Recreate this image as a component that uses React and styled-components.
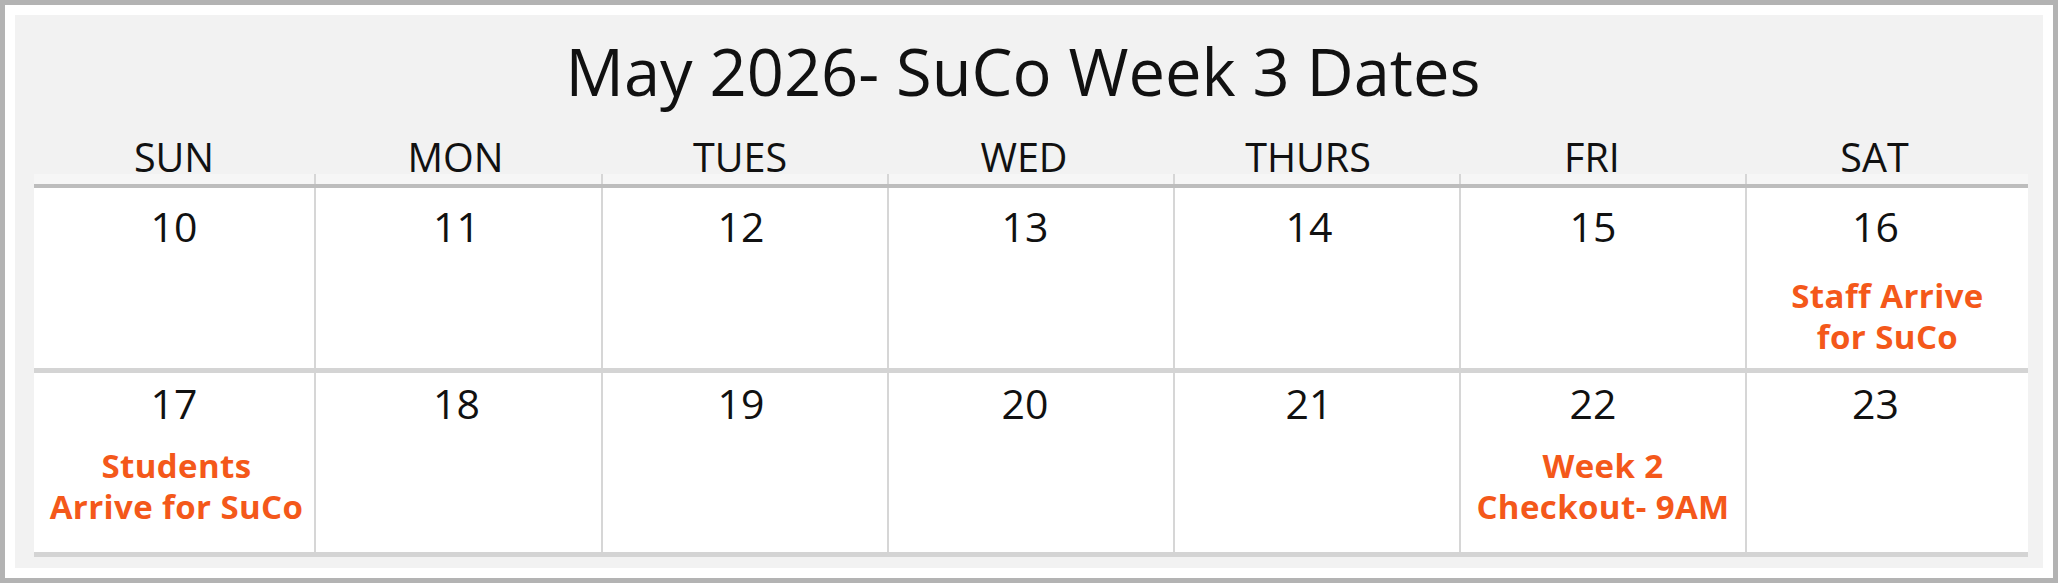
import React from "react";
import styled, { createGlobalStyle } from "styled-components";

const GlobalStyle = createGlobalStyle`
  html, body {
    margin: 0;
    padding: 0;
    background: #ffffff;
  }
  body {
    font-family: "Open Sans", "Noto Sans", sans-serif;
    color: #111111;
  }
`;

const Frame = styled.div`
  box-sizing: border-box;
  width: 2058px;
  height: 583px;
  border: 5px solid #b3b3b3;
  padding: 10px;
  background: #ffffff;
`;

const Panel = styled.div`
  box-sizing: border-box;
  height: 100%;
  background: #f2f2f2;
  padding: 12px 15px 10px 19px;
`;

const Title = styled.h1`
  margin: 0 0 15px;
  padding-right: 16px;
  font-size: 65px;
  font-weight: 400;
  line-height: 89px;
  text-align: center;
`;

const columns = "280px 287px repeat(4, 286px) 1fr";

const HeadRow = styled.div`
  display: grid;
  grid-template-columns: ${columns};
  border-bottom: 4px solid #bdbdbd;
`;

const HeadCell = styled.div`
  height: 53px;
  line-height: 53px;
  padding-right: ${(p) => p.$col * 4}px;
  font-size: 39.5px;
  text-align: center;
  background:
    ${(p) =>
      p.$col === 0
        ? ""
        : "linear-gradient(#d6d6d6, #d6d6d6) left bottom / 2px 10px no-repeat,"}
    linear-gradient(#f6f6f6, #f6f6f6) left bottom / 100% 10px no-repeat;
`;

const Week = styled.div`
  display: grid;
  grid-template-columns: ${columns};
  height: ${(p) => p.$height}px;
  border-bottom: 5px solid #d4d4d4;
  background: #ffffff;
`;

const Day = styled.div`
  display: flex;
  flex-direction: column;
  align-items: center;
  padding-top: ${(p) => p.$top}px;
  border-left: ${(p) => (p.$col === 0 ? "none" : "2px solid #d6d6d6")};
`;

const DayNumber = styled.div`
  margin-right: ${(p) => p.$col * 4}px;
  font-size: 41px;
  line-height: 56px;
`;

const Event = styled.div`
  margin-top: ${(p) => p.$gap}px;
  padding-left: ${(p) => (p.$col === 0 ? 5 : 0)}px;
  color: #f4581a;
  font-size: 33px;
  font-weight: 700;
  letter-spacing: 0.4px;
  line-height: 41px;
  text-align: center;
`;

const dayNames = ["SUN", "MON", "TUES", "WED", "THURS", "FRI", "SAT"];

const weeks = [
  {
    height: 180,
    top: 10,
    gap: 21,
    days: [
      { n: 10 },
      { n: 11 },
      { n: 12 },
      { n: 13 },
      { n: 14 },
      { n: 15 },
      { n: 16, event: ["Staff Arrive", "for SuCo"] },
    ],
  },
  {
    height: 179,
    top: 2,
    gap: 14,
    days: [
      { n: 17, event: ["Students", "Arrive for SuCo"] },
      { n: 18 },
      { n: 19 },
      { n: 20 },
      { n: 21 },
      { n: 22, event: ["Week 2", "Checkout- 9AM"] },
      { n: 23 },
    ],
  },
];

export default function App() {
  return (
    <>
      <GlobalStyle />
      <Frame>
        <Panel>
          <Title>May 2026- SuCo Week 3 Dates</Title>
          <HeadRow>
            {dayNames.map((name, i) => (
              <HeadCell key={name} $col={i}>
                {name}
              </HeadCell>
            ))}
          </HeadRow>
          {weeks.map((week) => (
            <Week key={week.days[0].n} $height={week.height}>
              {week.days.map((day, i) => (
                <Day key={day.n} $col={i} $top={week.top}>
                  <DayNumber $col={i}>{day.n}</DayNumber>
                  {day.event && (
                    <Event $col={i} $gap={week.gap}>
                      {day.event[0]}
                      <br />
                      {day.event[1]}
                    </Event>
                  )}
                </Day>
              ))}
            </Week>
          ))}
        </Panel>
      </Frame>
    </>
  );
}
